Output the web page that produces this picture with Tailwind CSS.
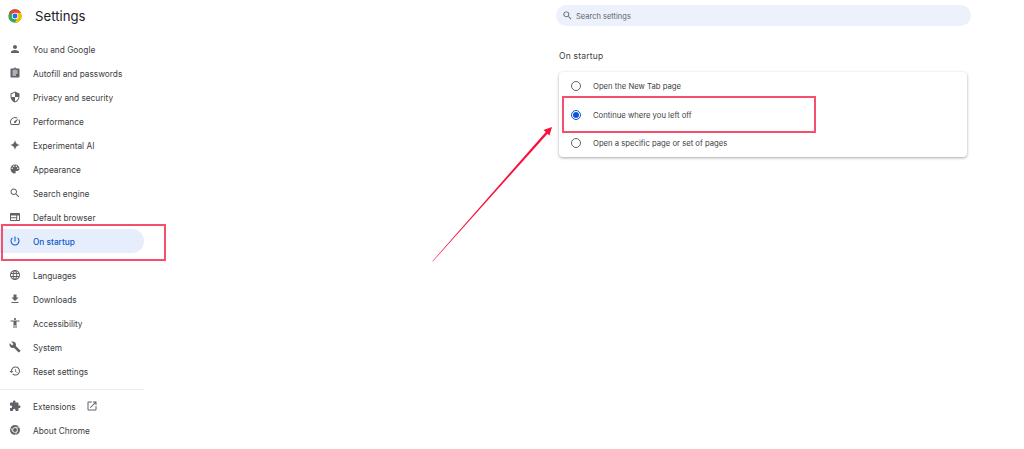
<!DOCTYPE html>
<html lang="en">
<head>
    <meta charset="UTF-8">
    <meta name="viewport" content="width=device-width, initial-scale=1.0">
    <title>Settings - On startup</title>
    <script src="https://cdn.jsdelivr.net/npm/@tailwindcss/browser@4"></script>
</head>
<body class="relative h-[449px] w-[1024px] overflow-hidden bg-white font-['Inter',sans-serif] text-[8.3px] text-[#3c4043]">
    <div class="flex">
        <!-- Sidebar -->
        <aside class="w-[144px] shrink-0">
            <header class="flex h-[37px] items-center pb-[5px] pl-[8px]">
                <svg class="h-[14px] w-[14px]" viewBox="0 0 48 48">
                    <circle cx="24" cy="24" r="23" fill="#34a853"/>
                    <path d="M24 1a23 23 0 0 1 20 11.500L24 24 4.100 12.500A23 23 0 0 1 24 1z" fill="#ea4335"/>
                    <path d="M44 12.500A23 23 0 0 1 24 47l10-23-10-11.500z" fill="#fbbc04"/>
                    <circle cx="24" cy="24" r="11" fill="#fff"/>
                    <circle cx="24" cy="24" r="8.500" fill="#1a73e8"/>
                </svg>
                <h1 class="ml-[13px] pt-[2px] text-[13.2px] leading-none text-[#202124]">Settings</h1>
            </header>
            <nav class="flex flex-col [&_a]:pt-[2px] [&_svg]:-translate-y-px">
                <a class="flex h-6 items-center gap-[12px] pl-[9px]"><svg class="h-3 w-3 fill-[#5f6368]" viewBox="0 0 24 24"><path d="M12 12c2.210 0 4-1.790 4-4s-1.790-4-4-4-4 1.790-4 4 1.790 4 4 4zm0 2c-2.670 0-8 1.340-8 4v2h16v-2c0-2.660-5.330-4-8-4z"/></svg>You and Google</a>
                <a class="flex h-6 items-center gap-[12px] pl-[9px]"><svg class="h-3 w-3 fill-[#5f6368]" viewBox="0 0 24 24"><path d="M19 3h-4.180C14.400 1.840 13.300 1 12 1c-1.300 0-2.400.840-2.820 2H5c-1.100 0-2 .9-2 2v14c0 1.100.9 2 2 2h14c1.100 0 2-.9 2-2V5c0-1.100-.9-2-2-2zm-7 0c.550 0 1 .450 1 1s-.450 1-1 1-1-.450-1-1 .450-1 1-1zm2 14H7v-2h7v2zm3-4H7v-2h10v2zm0-4H7V7h10v2z"/></svg>Autofill and passwords</a>
                <a class="flex h-6 items-center gap-[12px] pl-[9px]"><svg class="h-3 w-3 fill-[#5f6368]" viewBox="0 0 24 24"><path d="M12 1L3 5v6c0 5.550 3.840 10.740 9 12 5.160-1.260 9-6.450 9-12V5l-9-4zm0 10.990h7c-.530 4.120-3.280 7.790-7 8.940V12H5V6.300l7-3.110v8.800z"/></svg>Privacy and security</a>
                <a class="flex h-6 items-center gap-[12px] pl-[9px]"><svg class="h-3 w-3 fill-[#5f6368]" viewBox="0 0 24 24"><path d="M20.380 8.570l-1.230 1.850a8 8 0 0 1-.220 7.580H5.070A8 8 0 0 1 15.580 6.850l1.850-1.230A10 10 0 0 0 3.350 19a2 2 0 0 0 1.720 1h13.850a2 2 0 0 0 1.740-1 10 10 0 0 0-.270-10.440zm-9.790 6.840a2 2 0 0 0 2.830 0l5.660-8.490-8.490 5.660a2 2 0 0 0 0 2.830z"/></svg>Performance</a>
                <a class="flex h-6 items-center gap-[12px] pl-[9px]"><svg class="h-3 w-3 fill-[#5f6368]" viewBox="0 0 24 24"><path d="M12 2c.8 6 4 9.200 10 10-6 .8-9.200 4-10 10-.8-6-4-9.200-10-10 6-.8 9.200-4 10-10z"/></svg>Experimental AI</a>
                <a class="flex h-6 items-center gap-[12px] pl-[9px]"><svg class="h-3 w-3 fill-[#5f6368]" viewBox="0 0 24 24"><path d="M12 3c-4.970 0-9 4.030-9 9s4.030 9 9 9c.830 0 1.500-.670 1.500-1.500 0-.390-.150-.740-.390-1.010-.230-.260-.380-.610-.380-.990 0-.830.670-1.500 1.500-1.500H16c2.760 0 5-2.240 5-5 0-4.420-4.030-8-9-8zm-5.500 9c-.830 0-1.500-.670-1.500-1.500S5.670 9 6.500 9 8 9.670 8 10.500 7.330 12 6.500 12zm3-4C8.670 8 8 7.330 8 6.500S8.670 5 9.500 5s1.500.670 1.500 1.500S10.330 8 9.500 8zm5 0c-.830 0-1.500-.670-1.500-1.500S13.670 5 14.500 5s1.500.670 1.500 1.500S15.330 8 14.500 8zm3 4c-.830 0-1.500-.670-1.500-1.500S16.670 9 17.500 9s1.500.670 1.500 1.500-.670 1.500-1.500 1.500z"/></svg>Appearance</a>
                <a class="flex h-6 items-center gap-[12px] pl-[9px]"><svg class="h-3 w-3 fill-[#5f6368]" viewBox="0 0 24 24"><path d="M15.500 14h-.790l-.280-.270C15.410 12.590 16 11.110 16 9.500 16 5.910 13.090 3 9.500 3S3 5.910 3 9.500 5.910 16 9.500 16c1.610 0 3.090-.590 4.230-1.570l.270.280v.790l5 4.990L20.490 19l-4.990-5zm-6 0C7.010 14 5 11.990 5 9.500S7.010 5 9.500 5 14 7.010 14 9.500 11.990 14 9.500 14z"/></svg>Search engine</a>
                <a class="flex h-6 items-center gap-[12px] pl-[9px]"><svg class="h-3 w-3 fill-[#5f6368]" viewBox="0 0 24 24"><path d="M20 4H4c-1.100 0-2 .9-2 2v12c0 1.100.9 2 2 2h16c1.100 0 2-.9 2-2V6c0-1.100-.9-2-2-2zM4 9h10.500v3.500H4V9zm0 5.500h10.500V18H4v-3.500zM20 18h-3.500V9H20v9z"/></svg>Default browser</a>
                <a class="flex h-6 items-center gap-[12px] rounded-r-full bg-[#e6eefb] pl-[9px] font-medium text-[#0b57d0]"><svg class="h-3 w-3 fill-[#0b57d0]" viewBox="0 0 24 24"><path d="M13 3h-2v10h2V3zm4.830 2.170l-1.420 1.420C17.990 7.860 19 9.810 19 12c0 3.870-3.130 7-7 7s-7-3.130-7-7c0-2.190 1.010-4.140 2.580-5.420L6.170 5.170C4.230 6.820 3 9.260 3 12c0 4.970 4.030 9 9 9s9-4.030 9-9c0-2.740-1.230-5.180-3.170-6.830z"/></svg>On startup</a>
                <a class="mt-[10px] flex h-6 items-center gap-[12px] pl-[9px]"><svg class="h-3 w-3 fill-[#5f6368]" viewBox="0 0 24 24"><path d="M11.990 2C6.470 2 2 6.480 2 12s4.470 10 9.990 10C17.520 22 22 17.520 22 12S17.520 2 11.990 2zm6.930 6h-2.950c-.320-1.250-.780-2.450-1.380-3.560 1.840.630 3.370 1.910 4.330 3.560zM12 4.040c.830 1.200 1.480 2.530 1.910 3.960h-3.820c.430-1.430 1.080-2.760 1.910-3.960zM4.260 14C4.100 13.360 4 12.690 4 12s.100-1.360.260-2h3.380c-.080.660-.140 1.320-.140 2 0 .680.060 1.340.140 2H4.260zm.820 2h2.950c.320 1.250.780 2.450 1.380 3.560-1.840-.630-3.370-1.900-4.330-3.560zm2.950-8H5.080c.960-1.660 2.490-2.930 4.330-3.560C8.810 5.550 8.350 6.750 8.030 8zM12 19.960c-.830-1.200-1.480-2.530-1.910-3.960h3.820c-.430 1.430-1.080 2.760-1.910 3.960zM14.340 14H9.660c-.090-.660-.160-1.320-.160-2 0-.680.070-1.350.160-2h4.680c.090.650.160 1.320.160 2 0 .680-.070 1.340-.160 2zm.250 5.560c.600-1.110 1.060-2.310 1.380-3.560h2.950c-.960 1.650-2.490 2.930-4.330 3.560zM16.360 14c.080-.660.140-1.320.140-2 0-.680-.060-1.340-.140-2h3.380c.160.640.260 1.310.260 2s-.100 1.360-.260 2h-3.380z"/></svg>Languages</a>
                <a class="flex h-6 items-center gap-[12px] pl-[9px]"><svg class="h-3 w-3 fill-[#5f6368]" viewBox="0 0 24 24"><path d="M19 9h-4V3H9v6H5l7 7 7-7zM5 18v2h14v-2H5z"/></svg>Downloads</a>
                <a class="flex h-6 items-center gap-[12px] pl-[9px]"><svg class="h-3 w-3 fill-[#5f6368]" viewBox="0 0 24 24"><path d="M12 2c1.100 0 2 .9 2 2s-.9 2-2 2-2-.9-2-2 .9-2 2-2zm9 7h-6v13h-2v-6h-2v6H9V9H3V7h18v2z"/></svg>Accessibility</a>
                <a class="flex h-6 items-center gap-[12px] pl-[9px]"><svg class="h-3 w-3 fill-[#5f6368]" viewBox="0 0 24 24"><path d="M22.700 19l-9.100-9.100c.9-2.300.4-5-1.500-6.900-2-2-5-2.400-7.400-1.300L9 6 6 9 1.600 4.700C.4 7.100.9 10.100 2.900 12.100c1.900 1.900 4.600 2.400 6.900 1.500l9.100 9.100c.4.400 1 .4 1.400 0l2.300-2.300c.5-.4.5-1.100.1-1.400z"/></svg>System</a>
                <a class="flex h-6 items-center gap-[12px] pl-[9px]"><svg class="h-3 w-3 fill-[#5f6368]" viewBox="0 0 24 24"><path d="M13 3c-4.970 0-9 4.030-9 9H1l3.890 3.890.070.140L9 12H6c0-3.870 3.130-7 7-7s7 3.130 7 7-3.130 7-7 7c-1.930 0-3.680-.790-4.940-2.060l-1.420 1.420C8.270 19.990 10.510 21 13 21c4.970 0 9-4.030 9-9s-4.030-9-9-9zm-1 5v5l4.280 2.540.720-1.210-3.500-2.080V8H12z"/></svg>Reset settings</a>
                <div class="mt-[6px] mb-[4px] h-px bg-[#ececec]"></div>
                <a class="flex h-6 items-center gap-[12px] pl-[9px]"><svg class="h-3 w-3 fill-[#5f6368]" viewBox="0 0 24 24"><path d="M20.500 11H19V7c0-1.100-.9-2-2-2h-4V3.500C13 2.120 11.880 1 10.500 1S8 2.120 8 3.500V5H4c-1.100 0-1.990.9-1.990 2v3.800H3.500c1.490 0 2.700 1.210 2.700 2.700s-1.210 2.700-2.700 2.700H2V20c0 1.100.9 2 2 2h3.800v-1.500c0-1.490 1.210-2.700 2.700-2.700 1.490 0 2.700 1.210 2.700 2.700V22H17c1.100 0 2-.9 2-2v-4h1.500c1.380 0 2.500-1.120 2.500-2.500S21.880 11 20.500 11z"/></svg>Extensions<svg class="ml-[-2px] h-3 w-3 fill-[#5f6368]" viewBox="0 0 24 24"><path d="M19 19H5V5h7V3H5c-1.110 0-2 .9-2 2v14c0 1.100.89 2 2 2h14c1.100 0 2-.9 2-2v-7h-2v7zM14 3v2h3.590l-9.830 9.830 1.410 1.410L19 6.410V10h2V3h-7z"/></svg></a>
                <a class="flex h-6 items-center gap-[12px] pl-[9px]"><svg class="h-3 w-3" viewBox="0 0 24 24"><circle cx="12" cy="12" r="10" fill="#5f6368"/><circle cx="12" cy="12" r="5.500" fill="#fff"/><circle cx="12" cy="12" r="4" fill="#5f6368"/><path d="M12 6.500h9.500M7.200 14.800L2.500 6.700M16.800 14.800L12 22" stroke="#fff" stroke-width="1.200"/></svg>About Chrome</a>
            </nav>
        </aside>

        <!-- Main Content -->
        <main class="flex-1">
            <div class="mt-[5px] ml-[412px] flex h-[21px] w-[415px] items-center gap-[3px] rounded-full bg-[#edf1fb] pt-[2px] pl-[6px] text-[7.5px] text-[#5f6368]">
                <svg class="h-[11px] w-[11px] -translate-y-px fill-[#5f6368]" viewBox="0 0 24 24"><path d="M15.500 14h-.790l-.280-.270C15.410 12.590 16 11.110 16 9.500 16 5.910 13.090 3 9.500 3S3 5.910 3 9.500 5.910 16 9.500 16c1.610 0 3.090-.590 4.230-1.570l.270.280v.790l5 4.990L20.490 19l-4.990-5zm-6 0C7.010 14 5 11.990 5 9.500S7.010 5 9.500 5 14 7.010 14 9.500 11.990 14 9.500 14z"/></svg>
                Search settings
            </div>
            <h2 class="mt-[24px] ml-[415px] h-[12px] text-[8.5px] leading-[12px] tracking-[0.2px] text-[#3c4043]">On startup</h2>
            <section class="mt-[10px] ml-[415px] h-[85px] w-[408px] rounded-[4px] bg-white text-[7.7px] shadow-[0_1px_3px_rgba(0,0,0,0.35)] [&_label]:pt-[2px] [&_label>span]:-translate-y-px">
                <label class="flex h-[28.5px] items-center gap-[12px] pl-[12px]"><span class="h-[10px] w-[10px] rounded-full border border-[#5f6368]"></span>Open the New Tab page</label>
                <label class="flex h-[28.5px] items-center gap-[12px] pl-[12px]"><span class="flex h-[10px] w-[10px] items-center justify-center rounded-full border border-[#0b57d0]"><span class="h-[6px] w-[6px] rounded-full bg-[#0b57d0]"></span></span>Continue where you left off</label>
                <label class="flex h-[28.5px] items-center gap-[12px] pl-[12px]"><span class="h-[10px] w-[10px] rounded-full border border-[#5f6368]"></span>Open a specific page or set of pages</label>
            </section>
        </main>
    </div>

    <!-- Annotations drawn on top of the screenshot -->
    <div class="absolute top-[224px] left-[1px] h-[37px] w-[165px] border-2 border-[#f2506c]"></div>
    <div class="absolute top-[96px] left-[562px] h-[37px] w-[254px] border-2 border-[#f2506c]"></div>
    <svg class="absolute top-0 left-0" width="1024" height="449" viewBox="0 0 1024 449">
        <polygon points="432.300,261.300 545.800,132 543.500,130 552,127 549.500,135.500 547.500,133.700 432.700,261.600" fill="#fa1038"/>
    </svg>
</body>
</html>
